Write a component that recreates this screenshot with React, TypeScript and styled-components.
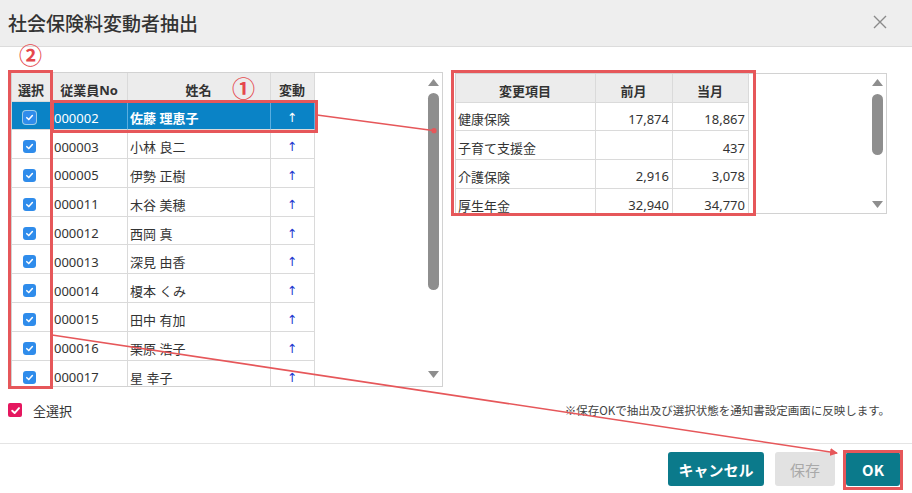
import React from "react";
import styled, { createGlobalStyle, css } from "styled-components";

const GlobalStyle = createGlobalStyle`
  html, body { margin: 0; padding: 0; background: #fff; }
  body { font-family: "Noto Sans", "Noto Sans CJK JP", sans-serif; color: #333; }
  * { box-sizing: border-box; }
`;

const Dialog = styled.div`
  position: relative;
  width: 912px;
  height: 493px;
  background: #fff;
  overflow: hidden;
`;

const Header = styled.header`
  height: 47px;
  background: #eeeeee;
  border-bottom: 1px solid #dcdcdc;
  display: flex;
  align-items: center;
  justify-content: space-between;
  padding: 0 25px 2px 8px;
`;

const Title = styled.h1`
  margin: 0;
  font-family: "Noto Sans CJK JP", sans-serif;
  font-size: 19px;
  font-weight: 500;
  color: #333;
`;

const CloseButton = styled.button`
  width: 14px;
  height: 14px;
  padding: 0;
  border: none;
  background: transparent;
  display: flex;
  align-items: center;
  justify-content: center;
`;

const Main = styled.div`
  display: flex;
  align-items: flex-start;
  gap: 12px;
  padding: 25px 0 0 11px;
`;

const Grid = styled.div<{ $w: number; $h: number; $top?: number }>`
  display: flex;
  width: ${(p) => p.$w}px;
  height: ${(p) => p.$h}px;
  margin-top: ${(p) => p.$top ?? 0}px;
  border: 1px solid #d2d2d2;
  background: #fff;
  overflow: hidden;
`;

const Table = styled.div`
  display: flex;
  flex-direction: column;
  flex: none;
`;

const Row = styled.div<{ $cols: string; $selected?: boolean; $head?: boolean }>`
  display: grid;
  grid-template-columns: ${(p) => p.$cols};
  height: ${(p) => (p.$head ? "28.5px" : "28.8px")};
  flex: none;
  background: ${(p) => (p.$head ? "#ececec" : p.$selected ? "#0a83c6" : "#fff")};
  color: ${(p) => (p.$selected ? "#fff" : "#333")};
  font-weight: ${(p) => (p.$head ? 700 : 400)};
`;

const Cell = styled.div<{ $align?: "left" | "center" | "right"; $sel?: boolean; $bold?: boolean }>`
  display: flex;
  align-items: center;
  justify-content: ${(p) =>
    p.$align === "center" ? "center" : p.$align === "right" ? "flex-end" : "flex-start"};
  padding: 5px 3px 0 2px;
  border-right: 1px solid ${(p) => (p.$sel ? "#5aaee0" : "#dadada")};
  border-bottom: 1px solid #dadada;
  font-size: 13px;
  white-space: nowrap;
  overflow: hidden;
  ${(p) => p.$bold && css`font-weight: 700;`}
`;

const Arrow = styled.span<{ $sel?: boolean }>`
  font-family: "DejaVu Sans", sans-serif;
  font-size: 12.5px;
  color: ${(p) => (p.$sel ? "#fff" : "#2638d0")};
`;

const Check = styled.span<{ $sel?: boolean }>`
  width: 13px;
  height: 13px;
  border-radius: 3px;
  background: #2f8ceb;
  margin-right: 3px;
  display: flex;
  align-items: center;
  justify-content: center;
  ${(p) => p.$sel && css`box-shadow: 0 0 0 1px rgba(255, 255, 255, 0.6);`}
`;

const Filler = styled.div`
  flex: 1;
`;

const Scrollbar = styled.div<{ $pt: number; $pb: number }>`
  width: 18px;
  flex: none;
  display: flex;
  flex-direction: column;
  align-items: center;
  padding: ${(p) => p.$pt}px 0 ${(p) => p.$pb}px;
`;

const Thumb = styled.div<{ $h: number; $mt: number }>`
  width: 11px;
  height: ${(p) => p.$h}px;
  margin-top: ${(p) => p.$mt}px;
  border-radius: 6px;
  background: #8e8e8e;
  flex: none;
`;

const Options = styled.div`
  display: flex;
  align-items: center;
  justify-content: space-between;
  height: 26px;
  margin-top: 10px;
  padding: 0 22px 0 8px;
`;

const SelectAll = styled.label`
  display: flex;
  align-items: center;
  gap: 11px;
  font-size: 13px;
  color: #333;
`;

const PinkBox = styled.span`
  width: 14px;
  height: 14px;
  border-radius: 2px;
  background: #e5175f;
  display: flex;
  align-items: center;
  justify-content: center;
`;

const Note = styled.span`
  font-family: "Noto Sans CJK JP", sans-serif;
  font-size: 11.5px;
  color: #444;
`;

const Divider = styled.hr`
  margin: 20px 0 0;
  border: none;
  border-top: 1px solid #e4e4e4;
`;

const ButtonBar = styled.div`
  display: flex;
  justify-content: flex-end;
  gap: 11px;
  padding: 8px 12px 0 0;
`;

const Btn = styled.button<{ $w: number; $disabled?: boolean }>`
  width: ${(p) => p.$w}px;
  height: 34px;
  border: none;
  border-radius: 3px;
  font-family: "Noto Sans CJK JP", sans-serif;
  font-size: 15px;
  padding: 0;
  background: ${(p) => (p.$disabled ? "#e2e2e2" : "#0b7a8b")};
  color: ${(p) => (p.$disabled ? "#a9a9a9" : "#fff")};
  font-weight: ${(p) => (p.$disabled ? 400 : 700)};
`;

const Overlay = styled.div`
  position: absolute;
  inset: 0;
  pointer-events: none;
`;

const RedBox = styled.div<{ $x: number; $y: number; $w: number; $h: number }>`
  position: absolute;
  left: ${(p) => p.$x}px;
  top: ${(p) => p.$y}px;
  width: ${(p) => p.$w}px;
  height: ${(p) => p.$h}px;
  border: 3px solid #e6575a;
`;

const Marker = styled.span<{ $x: number; $y: number }>`
  position: absolute;
  left: ${(p) => p.$x}px;
  top: ${(p) => p.$y}px;
  font-family: "Noto Sans CJK JP", sans-serif;
  font-size: 23px;
  font-weight: 700;
  line-height: 1;
  color: #e5484d;
`;

const ArrowSvg = styled.svg`
  position: absolute;
  left: 0;
  top: 0;
`;

const CheckMark = ({ size = 9 }: { size?: number }) => (
  <svg width={size} height={size} viewBox="0 0 10 10">
    <path d="M2 5.2 L4.2 7.3 L8.2 2.8" fill="none" stroke="#fff" strokeWidth="1.7" strokeLinecap="round" strokeLinejoin="round" />
  </svg>
);

const TriUp = () => (
  <svg width="11" height="7" viewBox="0 0 11 7">
    <path d="M5.5 0 L11 7 L0 7 Z" fill="#8e8e8e" />
  </svg>
);
const TriDown = () => (
  <svg width="11" height="7" viewBox="0 0 11 7">
    <path d="M0 0 L11 0 L5.5 7 Z" fill="#8e8e8e" />
  </svg>
);

const employees = [
  ["000002", "佐藤 理恵子"],
  ["000003", "小林 良二"],
  ["000005", "伊勢 正樹"],
  ["000011", "木谷 美穂"],
  ["000012", "西岡 真"],
  ["000013", "深見 由香"],
  ["000014", "榎本 くみ"],
  ["000015", "田中 有加"],
  ["000016", "栗原 浩子"],
  ["000017", "星 幸子"],
];

const changes = [
  ["健康保険", "17,874", "18,867"],
  ["子育て支援金", "", "437"],
  ["介護保険", "2,916", "3,078"],
  ["厚生年金", "32,940", "34,770"],
];

const LCOLS = "40px 76px 143px 44px";
const RCOLS = "140px 77px 76px";

export default function App() {
  return (
    <>
      <GlobalStyle />
      <Dialog>
        <Header>
          <Title>社会保険料変動者抽出</Title>
          <CloseButton aria-label="close">
            <svg width="14" height="14" viewBox="0 0 14 14">
              <path d="M1 1 L13 13 M13 1 L1 13" stroke="#8a8a8a" strokeWidth="1.4" />
            </svg>
          </CloseButton>
        </Header>

        <Main>
          <Grid $w={432} $h={315}>
            <Table>
              <Row $cols={LCOLS} $head>
                <Cell $align="center">選択</Cell>
                <Cell $align="center">従業員No</Cell>
                <Cell $align="center">姓名</Cell>
                <Cell $align="center">変動</Cell>
              </Row>
              {employees.map(([no, name], i) => {
                const sel = i === 0;
                return (
                  <Row key={no} $cols={LCOLS} $selected={sel}>
                    <Cell $align="center" $sel={sel}>
                      <Check $sel={sel}>
                        <CheckMark />
                      </Check>
                    </Cell>
                    <Cell $sel={sel}>{no}</Cell>
                    <Cell $sel={sel} $bold={sel}>{name}</Cell>
                    <Cell $align="center" $sel={sel}>
                      <Arrow $sel={sel}>↑</Arrow>
                    </Cell>
                  </Row>
                );
              })}
            </Table>
            <Filler />
            <Scrollbar $pt={6} $pb={8}>
              <TriUp />
              <Thumb $h={197} $mt={7} />
              <Filler />
              <TriDown />
            </Scrollbar>
          </Grid>

          <Grid $w={432} $h={141} $top={1}>
            <Table>
              <Row $cols={RCOLS} $head>
                <Cell $align="center">変更項目</Cell>
                <Cell $align="center">前月</Cell>
                <Cell $align="center">当月</Cell>
              </Row>
              {changes.map(([item, prev, cur]) => (
                <Row key={item} $cols={RCOLS}>
                  <Cell>{item}</Cell>
                  <Cell $align="right">{prev}</Cell>
                  <Cell $align="right">{cur}</Cell>
                </Row>
              ))}
            </Table>
            <Filler />
            <Scrollbar $pt={5} $pb={5}>
              <TriUp />
              <Thumb $h={61} $mt={8} />
              <Filler />
              <TriDown />
            </Scrollbar>
          </Grid>
        </Main>

        <Options>
          <SelectAll>
            <PinkBox>
              <CheckMark size={11} />
            </PinkBox>
            全選択
          </SelectAll>
          <Note>※保存OKで抽出及び選択状態を通知書設定画面に反映します。</Note>
        </Options>

        <Divider />

        <ButtonBar>
          <Btn $w={96}>キャンセル</Btn>
          <Btn $w={60} $disabled>保存</Btn>
          <Btn $w={54}>OK</Btn>
        </ButtonBar>

        <Overlay>
          <ArrowSvg width="912" height="493" viewBox="0 0 912 493">
            <defs>
              <marker id="ah" markerWidth="8" markerHeight="8" refX="7" refY="4" orient="auto" markerUnits="userSpaceOnUse">
                <path d="M0 0 L8 4 L0 8 Z" fill="#e6575a" />
              </marker>
            </defs>
            <line x1="317" y1="115" x2="433" y2="130.5" stroke="#e6575a" strokeWidth="1.6" />
            <circle cx="434" cy="130.7" r="2.6" fill="#e6575a" />
            <line x1="52" y1="335" x2="837" y2="453" stroke="#e6575a" strokeWidth="1.6" markerEnd="url(#ah)" />
          </ArrowSvg>
          <RedBox $x={8} $y={70} $w={45} $h={319} />
          <RedBox $x={51} $y={100} $w={267} $h={33} />
          <RedBox $x={451} $y={70} $w={305} $h={146} />
          <RedBox $x={843} $y={450} $w={60} $h={40} />
          <Marker $x={19} $y={43}>②</Marker>
          <Marker $x={232} $y={76}>①</Marker>
        </Overlay>
      </Dialog>
    </>
  );
}
